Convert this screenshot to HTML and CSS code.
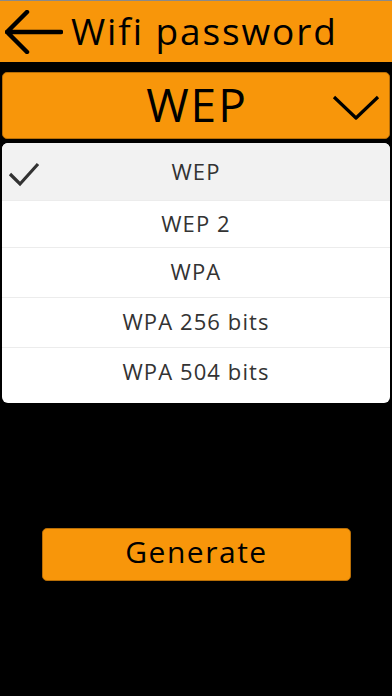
FILE: index.html
```html
<!DOCTYPE html>
<html lang="en">
<head>
    <meta charset="UTF-8">
    <meta name="viewport" content="width=device-width, initial-scale=1.0">
    <title>Wifi password</title>
    <link rel="stylesheet" href="styles.css">
</head>
<body>
    <header class="topbar">
        <svg class="back" width="58" height="44" viewBox="0 0 58 44">
            <path d="M22 2 L2 22 L22 42 M2 22 H56" fill="none" stroke="#000" stroke-width="4.5" stroke-linecap="round" stroke-linejoin="round"/>
        </svg>
        <h1>Wifi password</h1>
    </header>

    <div class="select">
        <span class="select-value">WEP</span>
        <svg class="chevron" width="48" height="26" viewBox="0 0 48 26">
            <path d="M2 2 L24 23 L46 2" fill="none" stroke="#000" stroke-width="3.2" stroke-linejoin="round"/>
        </svg>
    </div>

    <ul class="options">
        <li class="option selected">
            <svg class="check" width="32" height="26" viewBox="0 0 32 26">
                <path d="M2 12 L12 22 L30 2" fill="none" stroke="#333" stroke-width="3.2"/>
            </svg>
            WEP
        </li>
        <li class="option short">WEP 2</li>
        <li class="option">WPA</li>
        <li class="option">WPA 256 bits</li>
        <li class="option">WPA 504 bits</li>
    </ul>

    <div class="actions">
        <button class="btn">Generate</button>
    </div>
</body>
</html>
```

FILE: styles.css
```css
* {
    margin: 0;
    padding: 0;
    box-sizing: border-box;
    font-family: 'Open Sans', 'Noto Sans', sans-serif;
}

body {
    background-color: #000;
    color: #000;
    width: 392px;
    height: 696px;
    overflow: hidden;
}

.topbar {
    background-color: #f8960a;
    border-top: 1px solid #8a8a8a;
    height: 62px;
    display: flex;
    align-items: center;
    padding-left: 5px;
}

.back {
    display: block;
    margin-right: 8px;
}

.topbar h1 {
    font-size: 37px;
    font-weight: 400;
    letter-spacing: 1.9px;
    line-height: 1;
    padding-bottom: 3px;
}

.select {
    margin: 10px 2px 0 2px;
    height: 67px;
    background-color: #f8960a;
    border: 1px solid #b86e06;
    border-radius: 5px;
    display: flex;
    align-items: center;
    justify-content: center;
    position: relative;
}

.select-value {
    font-size: 46px;
    letter-spacing: 2px;
    line-height: 1;
    padding-bottom: 4px;
    padding-left: 2px;
}

.chevron {
    position: absolute;
    right: 9px;
    top: 22px;
}

.options {
    list-style: none;
    margin: 4px 2px 0 2px;
    background-color: #fff;
    border-radius: 6px;
    padding: 0 0 6px 0;
    overflow: hidden;
}

.option {
    height: 50px;
    display: flex;
    align-items: center;
    justify-content: center;
    font-size: 22px;
    letter-spacing: 1.1px;
    color: #333;
    border-top: 1px solid #ececec;
    padding-bottom: 3px;
    position: relative;
}

.option:first-child {
    border-top: none;
}

.option.short {
    height: 47px;
}

.option.selected {
    background-color: #f2f2f2;
    height: 57px;
    padding-top: 1px;
    padding-bottom: 3px;
}

.check {
    position: absolute;
    left: 6px;
    top: 19px;
}

.actions {
    padding: 125px 41px 0 42px;
}

.btn {
    width: 100%;
    height: 53px;
    background-color: #f8960a;
    border: 1px solid #b86e06;
    border-radius: 5px;
    font-size: 30px;
    letter-spacing: 1.5px;
    color: #000;
    line-height: 1;
    padding-bottom: 6px;
}
```
